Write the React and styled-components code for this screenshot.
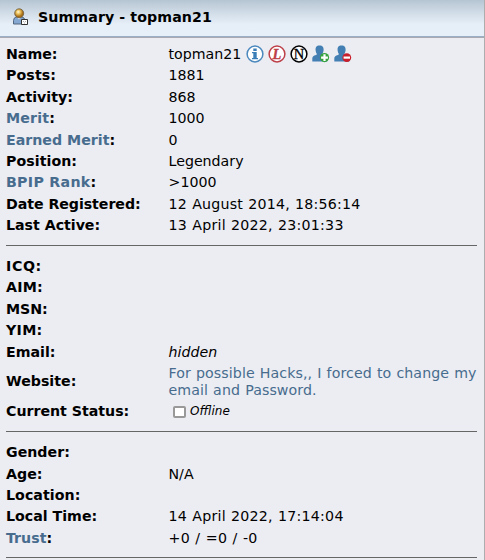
import styled, { createGlobalStyle } from "styled-components";

const GlobalStyle = createGlobalStyle`
  * {
    box-sizing: border-box;
  }

  body {
    margin: 0;
    background-color: #ecedf3;
    font-family: Verdana, "DejaVu Sans", sans-serif;
    font-size: 14.2px;
    color: #000;
  }
`;

const Panel = styled.main`
  width: 485px;
  height: 560px;
  overflow: hidden;
  background-color: #ecedf3;
  border-right: 1px solid #adadad;
`;

const TitleBar = styled.header`
  display: flex;
  align-items: center;
  height: 38px;
  padding: 0 0 3px 12px;
  gap: 9px;
  background: linear-gradient(#b6c5d3 0, #cbd8e3 10px, #e6eef7 24px, #e7eff8 36px);
  border-bottom: 1px solid #a9abb0;
  box-shadow: inset 0 -1px #9bb0c6;
`;

const Title = styled.h1`
  margin: 0;
  font-size: 14.2px;
  line-height: 20px;
  white-space: nowrap;
  letter-spacing: 0.09px;
`;

const Details = styled.div`
  padding: 5.9px 7px 0 6px;
`;

const Row = styled.div`
  display: grid;
  grid-template-columns: 162.5px 1fr;
  align-items: center;
  height: ${(props) => props.$height || 21.36}px;
  line-height: 17px;
`;

const Label = styled.div`
  font-weight: 700;
  white-space: nowrap;
  letter-spacing: ${(props) => props.$spacing || 0}px;
`;

const Value = styled.div`
  display: flex;
  align-items: center;
  white-space: nowrap;
  word-spacing: 0.5px;
  letter-spacing: ${(props) => props.$spacing || 0}px;
`;

const Link = styled.a`
  color: #476c8e;
`;

const Email = styled.em`
  font-style: italic;
`;

const Divider = styled.hr`
  height: 1px;
  margin: 8.4px 0 10.4px;
  border: 0;
  background-color: #666;
`;

const Icons = styled.span`
  display: flex;
  gap: 4px;
  margin: 0 0 2px 5px;
`;

const StatusBox = styled.span`
  width: 13px;
  height: 12px;
  margin: 0 4px 0 4.5px;
  border: 2px solid #999;
  border-radius: 2px;
  background-color: #fff;
`;

const StatusText = styled.em`
  font-size: 12px;
`;

function ProfileIcon() {
  return (
    <svg width="17" height="18" viewBox="0 0 17 18">
      <defs>
        <radialGradient id="head" cx=".4" cy=".35">
          <stop offset="0" stopColor="#fff8d8" />
          <stop offset=".45" stopColor="#edc35d" />
          <stop offset="1" stopColor="#a66e19" />
        </radialGradient>
      </defs>
      <path d="M1.500 16V12.500q0-3 3.500-4h4q4 1 4 4V16z" fill="#84a8d2" stroke="#52667d" />
      <path d="M5 9.500l2 2 2-2z" fill="#e8eef5" />
      <circle cx="7.200" cy="5.300" r="4.500" fill="url(#head)" stroke="#6b5a3c" strokeWidth=".8" />
      <path d="M9.500 11.500h6v5h-6z" fill="#fff" stroke="#333" />
      <path d="M11 13.500h1m1 0h1m-2 1.500h1" stroke="#aaa" />
    </svg>
  );
}

function InfoIcon() {
  return (
    <svg width="18" height="18" viewBox="0 0 18 18">
      <circle cx="9" cy="9" r="7.900" fill="#fff" stroke="#4a88bd" strokeWidth="1.500" />
      <path d="M7.300 3.500h3.400v2.600H7.300zM6 7h4.700v6H12v1.300H6V13h1.300V8.300H6z" fill="#3c7fb8" />
    </svg>
  );
}

function LetterIcon({ letter, color, italic }) {
  return (
    <svg width="18" height="18" viewBox="0 0 18 18">
      <circle cx="9" cy="9" r="7.900" fill="#fff" stroke={color} strokeWidth="1.500" />
      <text
        x="9"
        y="13.800"
        textAnchor="middle"
        fontFamily="Liberation Serif, serif"
        fontSize="14.500"
        fontWeight={italic ? 700 : 400}
        fontStyle={italic ? "italic" : "normal"}
        fill={color}
        stroke={color}
        strokeWidth=".3"
      >
        {letter}
      </text>
    </svg>
  );
}

function BuddyIcon({ remove }) {
  return (
    <svg width="18" height="18" viewBox="0 0 18 18">
      <path
        d="M7.500.6c3.200 0 4.300 2 4.100 4.700-.2 2-1 3-1.300 4 .5 1 5 1.200 5 4.200v3H.3v-3c0-3 4-3.200 4.700-4.200-.5-1-1.200-2-1.400-4C3.300 2.600 4.400.6 7.500.6z"
        fill="#437fb2"
      />
      {remove ? (
        <>
          <circle cx="12.800" cy="12.600" r="4.400" fill="#c91f2c" />
          <path d="M9.600 12.600H16" stroke="#fff" strokeWidth="2.200" />
        </>
      ) : (
        <>
          <circle cx="12.500" cy="12.600" r="4.600" fill="#35a23c" />
          <path d="M9.100 12.600h6.800M12.500 9.200V16" stroke="#fff" strokeWidth="2.200" />
        </>
      )}
    </svg>
  );
}

function Field({ label, link, labelSpacing, spacing, height, children }) {
  return (
    <Row $height={height}>
      <Label $spacing={labelSpacing}>
        {link ? <Link>{label}</Link> : label}:
      </Label>
      <Value $spacing={spacing}>{children}</Value>
    </Row>
  );
}

function App() {
  return (
    <>
      <GlobalStyle />
      <Panel>
        <TitleBar>
          <ProfileIcon />
          <Title>Summary - topman21</Title>
        </TitleBar>
        <Details>
          <Field label="Name">
            topman21
            <Icons>
              <InfoIcon />
              <LetterIcon letter="L" color="#bd3f48" italic />
              <LetterIcon letter="N" color="#000" />
              <BuddyIcon />
              <BuddyIcon remove />
            </Icons>
          </Field>
          <Field label="Posts" labelSpacing={0.1}>1881</Field>
          <Field label="Activity">868</Field>
          <Field label="Merit" link labelSpacing={0.15}>1000</Field>
          <Field label="Earned Merit" link>0</Field>
          <Field label="Position" labelSpacing={0.05}>Legendary</Field>
          <Field label="BPIP Rank" link labelSpacing={0.3}>&gt;1000</Field>
          <Field label="Date Registered" labelSpacing={-0.06} spacing={0.2}>
            12 August 2014, 18:56:14
          </Field>
          <Field label="Last Active" labelSpacing={-0.02} spacing={0.23}>
            13 April 2022, 23:01:33
          </Field>
          <Divider />
          <Field label="ICQ" labelSpacing={0.6} />
          <Field label="AIM" labelSpacing={0.2} />
          <Field label="MSN" labelSpacing={-0.1} />
          <Field label="YIM" labelSpacing={0.3} />
          <Field label="Email">
            <Email>hidden</Email>
          </Field>
          <Field label="Website" height={38.4} spacing={0.08}>
            <Link>
              For possible Hacks,, I forced to change my
              <br />
              email and Password.
            </Link>
          </Field>
          <Field label="Current Status" labelSpacing={-0.02}>
            <StatusBox />
            <StatusText>Offline</StatusText>
          </Field>
          <Divider />
          <Field label="Gender" />
          <Field label="Age">N/A</Field>
          <Field label="Location" labelSpacing={0.05} />
          <Field label="Local Time" spacing={0.23}>
            14 April 2022, 17:14:04
          </Field>
          <Field label="Trust" link spacing={0.3}>+0 / =0 / -0</Field>
          <Divider />
        </Details>
      </Panel>
    </>
  );
}

export default App;
